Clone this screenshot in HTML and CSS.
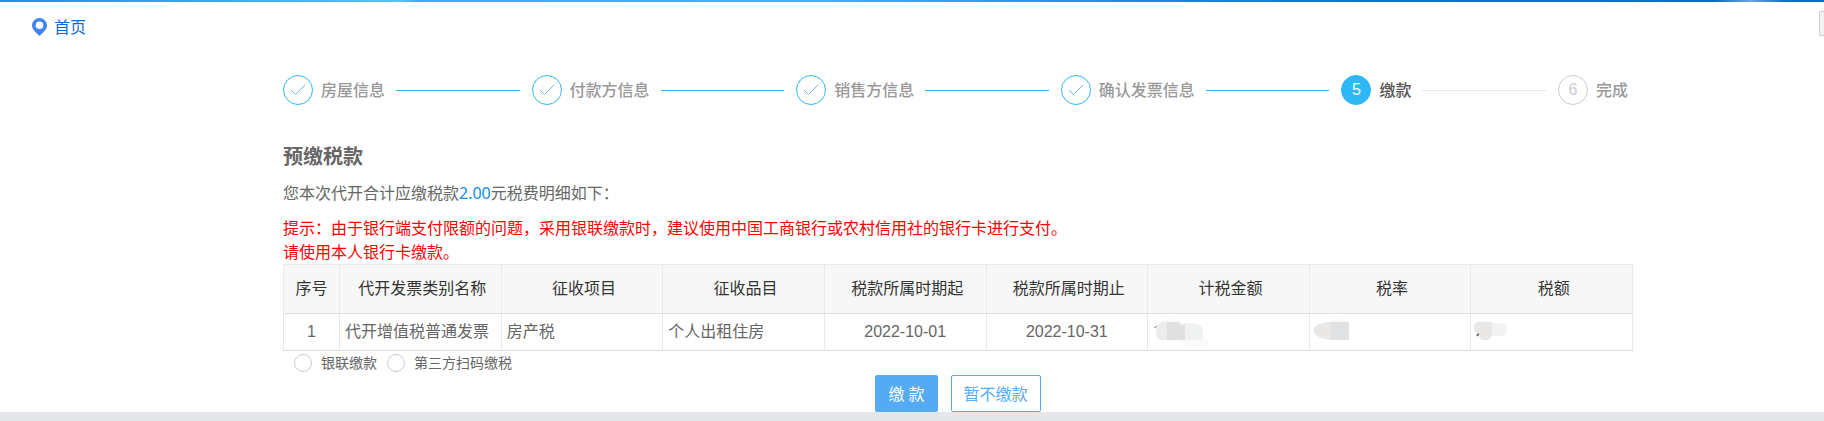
FILE: index.html
```html
<!DOCTYPE html>
<html lang="zh-CN">
<head>
<meta charset="utf-8">
<title>预缴税款</title>
<link rel="stylesheet" href="styles.css">
</head>
<body>
<div class="page">
  <div class="banner"></div>
  <header class="topbar">
    <a class="home" href="#">
      <svg class="home-icon" viewBox="0 0 15 18" aria-hidden="true"><path fill="#4285ee" fill-rule="evenodd" d="M7.500 0A7.500 7.500 0 0 0 0 7.500C0 11.500 4 14.500 7.500 18C11 14.500 15 11.500 15 7.500A7.500 7.500 0 0 0 7.500 0ZM7.500 3.400A3.800 3.800 0 1 1 7.500 11A3.800 3.800 0 1 1 7.500 3.400Z"/></svg>
      首页
    </a>
    <span class="edge-tab"></span>
  </header>
  <main class="content">
    <ol class="steps">
      <li class="step done"><span class="dot"><svg viewBox="0 0 16 12" aria-hidden="true"><path d="M1 6L5.500 10.500L15 1"/></svg></span><span class="label">房屋信息</span></li>
      <li class="step done"><span class="dot"><svg viewBox="0 0 16 12" aria-hidden="true"><path d="M1 6L5.500 10.500L15 1"/></svg></span><span class="label">付款方信息</span></li>
      <li class="step done"><span class="dot"><svg viewBox="0 0 16 12" aria-hidden="true"><path d="M1 6L5.500 10.500L15 1"/></svg></span><span class="label">销售方信息</span></li>
      <li class="step done"><span class="dot"><svg viewBox="0 0 16 12" aria-hidden="true"><path d="M1 6L5.500 10.500L15 1"/></svg></span><span class="label">确认发票信息</span></li>
      <li class="step active"><span class="dot">5</span><span class="label">缴款</span></li>
      <li class="step"><span class="dot">6</span><span class="label">完成</span></li>
    </ol>
    <h1 class="title">预缴税款</h1>
    <p class="summary">您本次代开合计应缴税款<span class="amount">2.00</span>元税费明细如下：</p>
    <p class="notice">提示：由于银行端支付限额的问题，采用银联缴款时，建议使用中国工商银行或农村信用社的银行卡进行支付。<br>请使用本人银行卡缴款。</p>
    <table class="detail">
      <thead>
        <tr><th class="col-no">序号</th><th>代开发票类别名称</th><th>征收项目</th><th>征收品目</th><th>税款所属时期起</th><th>税款所属时期止</th><th>计税金额</th><th>税率</th><th>税额</th></tr>
      </thead>
      <tbody>
        <tr>
          <td class="center">1</td><td>代开增值税普通发票</td><td>房产税</td><td>个人出租住房</td><td class="center">2022-10-01</td><td class="center">2022-10-31</td>
          <td class="masked"><svg class="mask" viewBox="0 0 60 30" aria-hidden="true"><path fill="#fafafa" d="M6 4Q12 0 22 0Q30 1 32 6L58 22Q58 28 44 28Q34 27 28 22H10Z"/><path fill="none" stroke="#777" d="M3 9L6 7"/><path fill="#ececec" d="M16 3H12Q5 6 5 12V17Q7 21 10 21H16Z"/><path fill="#e0e0e0" d="M16 3H28L30 6L34 5V21H16Z"/><path fill="#f0f2f1" d="M34 4H44Q50 6 52 10V21H34Z"/></svg></td>
          <td class="masked"><svg class="mask" viewBox="0 0 60 30" aria-hidden="true"><path fill="#fafafa" d="M12 3Q26 -3 36 3Z"/><path fill="#e9e8e6" d="M18 3Q3 3 0 11Q2 18 12 20L18 21Z"/><path fill="#e1e2e4" d="M18 3H36V21H18Z"/></svg></td>
          <td class="masked"><svg class="mask" viewBox="0 0 60 30" aria-hidden="true"><path fill="#fafafa" d="M0 4Q8 -1 14 4Z"/><path fill="none" stroke="#666" stroke-width="2" d="M3 17L5 14"/><path fill="#e9e8e7" d="M4 3Q0 4 0 8Q0 14 6 15Q5 20 8 21H15L18 16V3Z"/><path fill="#f1f3f3" d="M18 4H28Q34 6 33 11Q32 17 26 17H18Z"/></svg></td>
        </tr>
      </tbody>
    </table>
    <form class="pay">
      <div class="methods">
        <label class="method"><input type="radio" name="method">银联缴款</label>
        <label class="method"><input type="radio" name="method">第三方扫码缴税</label>
      </div>
      <div class="actions">
        <button type="button" class="btn primary">缴 款</button>
        <button type="button" class="btn">暂不缴款</button>
      </div>
    </form>
  </main>
</div>
</body>
</html>
```
FILE: styles.css
```css
* { box-sizing: border-box; }
body {
  margin: 0;
  background: #e5e6ea;
  color: #666;
  font: 16px/24px "Noto Sans", "Noto Sans CJK SC", sans-serif;
}
.page { background: #fff; }
.banner {
  height: 2px;
  background: linear-gradient(90deg, #1d8fdf, #5cc0f0 22%, #3aaef2 23%, #3db2f5 45%, #1c86d8 64%, #1074c8 75%, #0b6cc0 94%, #6ba6d8 96%, #0b6cc0 98%);
}
.topbar {
  display: flex;
  align-items: center;
  justify-content: space-between;
  height: 50px;
  padding-left: 32px;
}
.home { display: flex; align-items: center; gap: 7px; color: #0a6bd0; text-decoration: none; }
.home-icon { width: 15px; height: 18px; }
.edge-tab {
  width: 5px;
  height: 25px;
  margin-bottom: 8px;
  border: 1px solid #ccc;
  border-right: 0;
  border-radius: 2px 0 0 2px;
  background: #f2f2f2;
}
.content { padding: 23px 191px 0 283px; }
.steps { display: flex; gap: 12px; margin: 0 5px 0 0; padding: 0; list-style: none; }
.step { display: flex; flex: 1 1 auto; align-items: center; color: #999; }
.step:last-child { flex: none; }
.step:not(:last-child)::after {
  content: "";
  flex: 1 1 0;
  height: 1px;
  margin-left: 11px;
  background: #e9e9e9;
}
.step.done::after { background: #2db7f5; }
.dot {
  display: flex;
  align-items: center;
  justify-content: center;
  width: 30px;
  height: 30px;
  margin-right: 8px;
  border: 1px solid #ccc;
  border-radius: 50%;
  color: #ccc;
  font-family: "Liberation Sans", sans-serif;
}
.dot svg { width: 16px; height: 12px; fill: none; stroke: #6db9f5; }
.done .dot { border-color: #2db7f5; }
.active .dot { border-color: #2db7f5; background: #2db7f5; color: #fff; }
.label { font-weight: 500; white-space: nowrap; }
.active .label { color: #555; }
.title { margin: 38px 0 0; font-size: 20px; line-height: 28px; }
.summary { margin: 10px 0 11px; }
.amount { color: #108ee9; }
.notice { margin: 0; color: #f00; }
.detail {
  width: 100%;
  border-collapse: collapse;
  table-layout: fixed;
  border: 1px solid #ddd;
  font-family: "Liberation Sans", "Noto Sans CJK SC", sans-serif;
}
.detail th, .detail td {
  padding: 6px 5px;
  border: 1px solid #e9e9e9;
  border-bottom-color: #ddd;
  text-align: left;
  white-space: nowrap;
}
.detail th {
  padding: 12px 5px 12px 9px;
  background: #f7f7f7;
  color: #333;
  font-weight: 400;
  text-align: center;
}
.detail .center { text-align: center; }
.detail .masked { padding: 4px 3px 0; }
.detail .col-no { width: 56px; padding: 12px 5px; }
.mask { display: block; width: 60px; height: 30px; }
.methods { display: flex; gap: 10px; padding-left: 11px; font-size: 14px; }
.method { display: flex; align-items: center; gap: 9px; }
.method input {
  appearance: none;
  width: 18px;
  height: 18px;
  margin: 0;
  border: 1px solid #ccc;
  border-radius: 50%;
  background: #fff;
}
.actions { display: flex; justify-content: center; gap: 13px; }
.btn {
  height: 37px;
  padding: 0 12px;
  border: 1px solid #54aaf3;
  border-radius: 2px;
  background: #fff;
  color: #54aaf3;
  font: inherit;
}
.btn.primary { background: #54aaf3; color: #fff; }
```
